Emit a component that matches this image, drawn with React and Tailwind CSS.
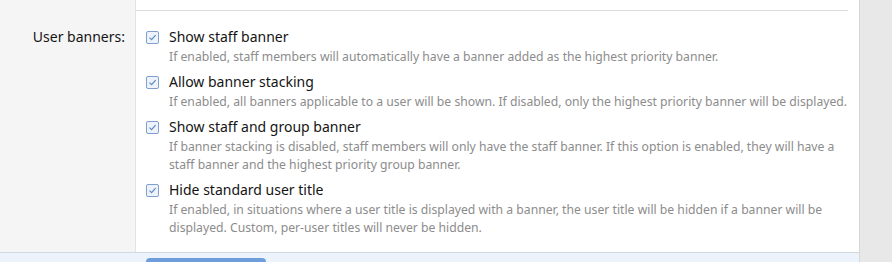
import React from "react";

const options = [
  {
    title: "Show staff banner",
    desc: ["If enabled, staff members will automatically have a banner added as the highest priority banner."],
  },
  {
    title: "Allow banner stacking",
    desc: [
      "If enabled, all banners applicable to a user will be shown. If disabled, only the highest priority banner will be displayed.",
    ],
  },
  {
    title: "Show staff and group banner",
    desc: [
      "If banner stacking is disabled, staff members will only have the staff banner. If this option is enabled, they will have a",
      "staff banner and the highest priority group banner.",
    ],
  },
  {
    title: "Hide standard user title",
    desc: [
      "If enabled, in situations where a user title is displayed with a banner, the user title will be hidden if a banner will be",
      "displayed. Custom, per-user titles will never be hidden.",
    ],
  },
];

const CheckBox = () => (
  <span className="mt-[4px] flex h-[13px] w-[13px] shrink-0 items-center justify-center rounded-[2px] border border-[#7f9fd0] bg-[#eef3fb]">
    <svg width="9" height="9" viewBox="0 0 9 9" fill="none">
      <path d="M1.5 4.6 L3.6 6.6 L7.6 2.2" stroke="#5a88c8" strokeWidth="1.2" />
    </svg>
  </span>
);

export default function App() {
  return (
    <div
      className="flex h-[262px] w-[892px] overflow-hidden bg-[#e8e8e8] text-[#141414]"
      style={{ fontFamily: '"Noto Sans", "Open Sans", sans-serif' }}
    >
      <div className="flex w-[860px] shrink-0 flex-col border-r border-[#d6d6d6] bg-white">
        <div className="flex h-[252px] shrink-0">
          <div className="w-[136px] shrink-0 border-r border-[#e3e3e3] bg-[#f5f5f5] pr-[10px] pt-[27px] text-right text-[14px] leading-[20px]">
            User banners:
          </div>
          <div className="flex-1 pr-[11px]">
            <div className="h-[11px] border-b border-[#dcdcdc]" />
            <div className="flex flex-col gap-[6px] pl-[10px] pt-[16px]">
              {options.map((opt) => (
                <div key={opt.title} className="flex gap-[10px]">
                  <CheckBox />
                  <div>
                    <div className="text-[14px] leading-[20px]">{opt.title}</div>
                    <div className="mt-[1px] text-[12.2px] leading-[18px] text-[#8c8c8c]">
                      {opt.desc.map((line) => (
                        <div key={line} className="whitespace-nowrap">{line}</div>
                      ))}
                    </div>
                  </div>
                </div>
              ))}
            </div>
          </div>
        </div>
        <div className="flex-1 border-t border-[#d3d9e3] bg-[#edf3fb] pl-[146px] pt-[5px]">
          <div className="h-[20px] w-[120px] rounded-[4px] bg-[#6e9ddb]" />
        </div>
      </div>
    </div>
  );
}
